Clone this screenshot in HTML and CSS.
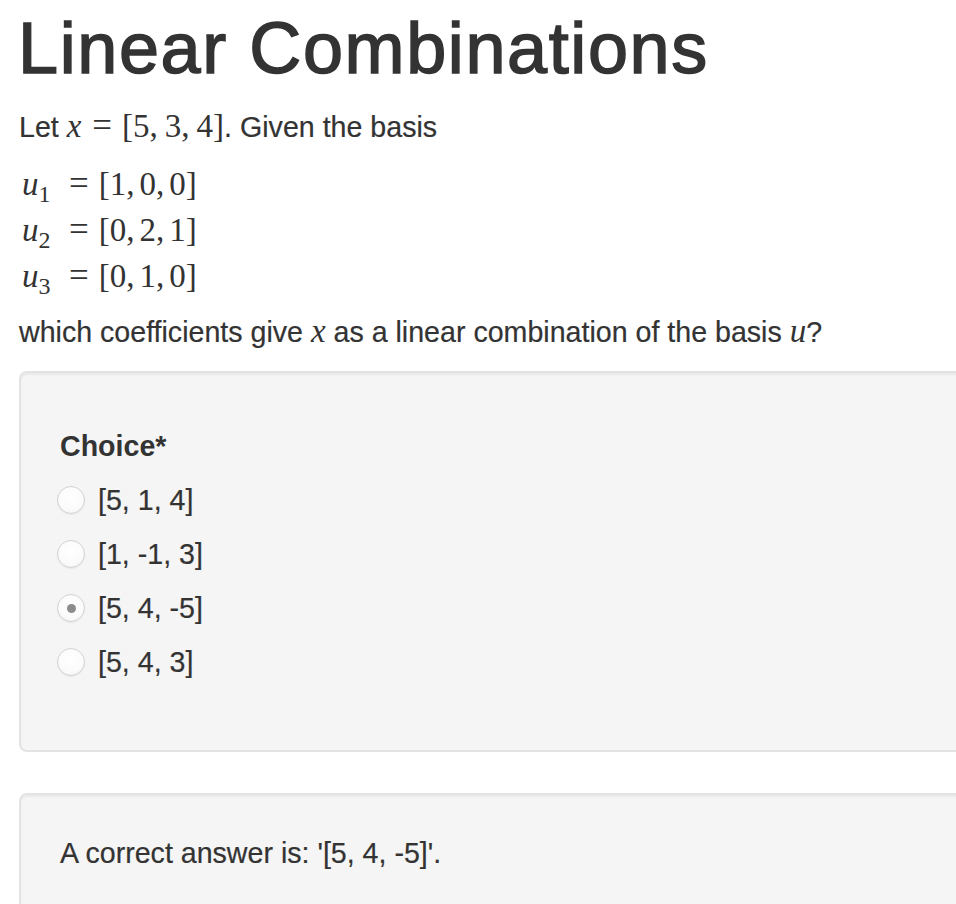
FILE: index.html
```html
<!DOCTYPE html>
<html>
<head>
<meta charset="utf-8">
<link rel="stylesheet" href="styles.css">
</head>
<body>
<div class="page">
  <h1 class="title">Linear Combinations</h1>
  <p class="text intro">Let <span class="math"><i>x</i><span class="op">=</span>[5,<span class="sp wide"></span>3,<span class="sp wide"></span>4]</span>. Given the basis</p>
  <div class="display">
    <div class="mrow"><span class="lhs"><i>u</i><sub>1</sub></span><span class="op">=</span><span class="rhs">[1,<span class="sp"></span>0,<span class="sp"></span>0]</span></div>
    <div class="mrow"><span class="lhs"><i>u</i><sub>2</sub></span><span class="op">=</span><span class="rhs">[0,<span class="sp"></span>2,<span class="sp"></span>1]</span></div>
    <div class="mrow"><span class="lhs"><i>u</i><sub>3</sub></span><span class="op">=</span><span class="rhs">[0,<span class="sp"></span>1,<span class="sp"></span>0]</span></div>
  </div>
  <p class="text question">which coefficients give <span class="math"><i>x</i></span> as a linear combination of the basis <span class="math"><i>u</i></span>?</p>

  <div class="well choices">
    <div class="label">Choice*</div>
    <div class="radio"><span class="dot"></span><span>[5, 1, 4]</span></div>
    <div class="radio"><span class="dot"></span><span>[1, -1, 3]</span></div>
    <div class="radio"><span class="dot checked"></span><span>[5, 4, -5]</span></div>
    <div class="radio"><span class="dot"></span><span>[5, 4, 3]</span></div>
  </div>

  <div class="well answer">
    <div class="text">A correct answer is: '[5, 4, -5]'.</div>
  </div>
</div>
</body>
</html>
```

FILE: styles.css
```css
html {
  overflow: hidden;
}
body {
  margin: 0;
  background: #ffffff;
  color: #333333;
  font-family: "Liberation Sans", Arial, sans-serif;
  font-size: 28.6px;
  line-height: 40px;
  -webkit-text-stroke: 0.2px #333333;
}
.page {
  padding-left: 19px;
}
.title {
  margin: 9px 0 0 -1px;
  font-size: 72px;
  font-weight: normal;
  line-height: 79px;
  letter-spacing: 1.6px;
  -webkit-text-stroke: 1.5px #333333;
}
.text {
  margin: 0;
}
.intro {
  margin-top: 18px;
}
.math {
  font-family: "Liberation Serif", "Times New Roman", serif;
  font-size: 33px;
  -webkit-text-stroke: 0;
}
.math i, .display i {
  font-style: italic;
}
.op {
  font-size: 35px;
  margin: 0 10px 0 11px;
}
.sp {
  display: inline-block;
  width: 5px;
}
.sp.wide {
  width: 7px;
}
.display {
  margin-top: 14px;
  font-family: "Liberation Serif", "Times New Roman", serif;
  font-size: 33px;
  line-height: 45px;
  padding-left: 3px;
  -webkit-text-stroke: 0;
}
.mrow {
  display: flex;
  align-items: baseline;
}
.lhs {
  width: 47px;
}
.lhs sub {
  font-size: 24px;
  line-height: 0;
  vertical-align: -7px;
}
.mrow .op {
  margin: 0 10px 0 0;
}
.question {
  margin-top: 12px;
}
.well {
  background: #f5f5f5;
  border: 2px solid #e3e3e3;
  border-radius: 8px;
  box-shadow: inset 0 2px 2px rgba(0, 0, 0, 0.05);
  margin-right: -60px;
}
.choices {
  margin-top: 19px;
  padding: 53px 38px 61px 39px;
}
.label {
  font-weight: bold;
  -webkit-text-stroke: 0;
}
.radio {
  display: flex;
  align-items: center;
  height: 54px;
}
.label + .radio {
  margin-top: 7px;
}
.dot {
  width: 26px;
  height: 26px;
  border: 1px solid #d2d2d2;
  border-radius: 50%;
  background: radial-gradient(circle at 50% 40%, #ffffff 0%, #fbfbfb 60%, #ededed 100%);
  box-shadow: 0 1px 1px rgba(0, 0, 0, 0.05);
  margin-left: -3px;
  margin-right: 13px;
  display: flex;
  align-items: center;
  justify-content: center;
  flex: none;
}
.dot.checked::after {
  content: "";
  width: 9px;
  height: 9px;
  border-radius: 50%;
  background: #8c8c8c;
}
.answer {
  margin-top: 41px;
  padding: 38px 38px 60px 39px;
}
```
